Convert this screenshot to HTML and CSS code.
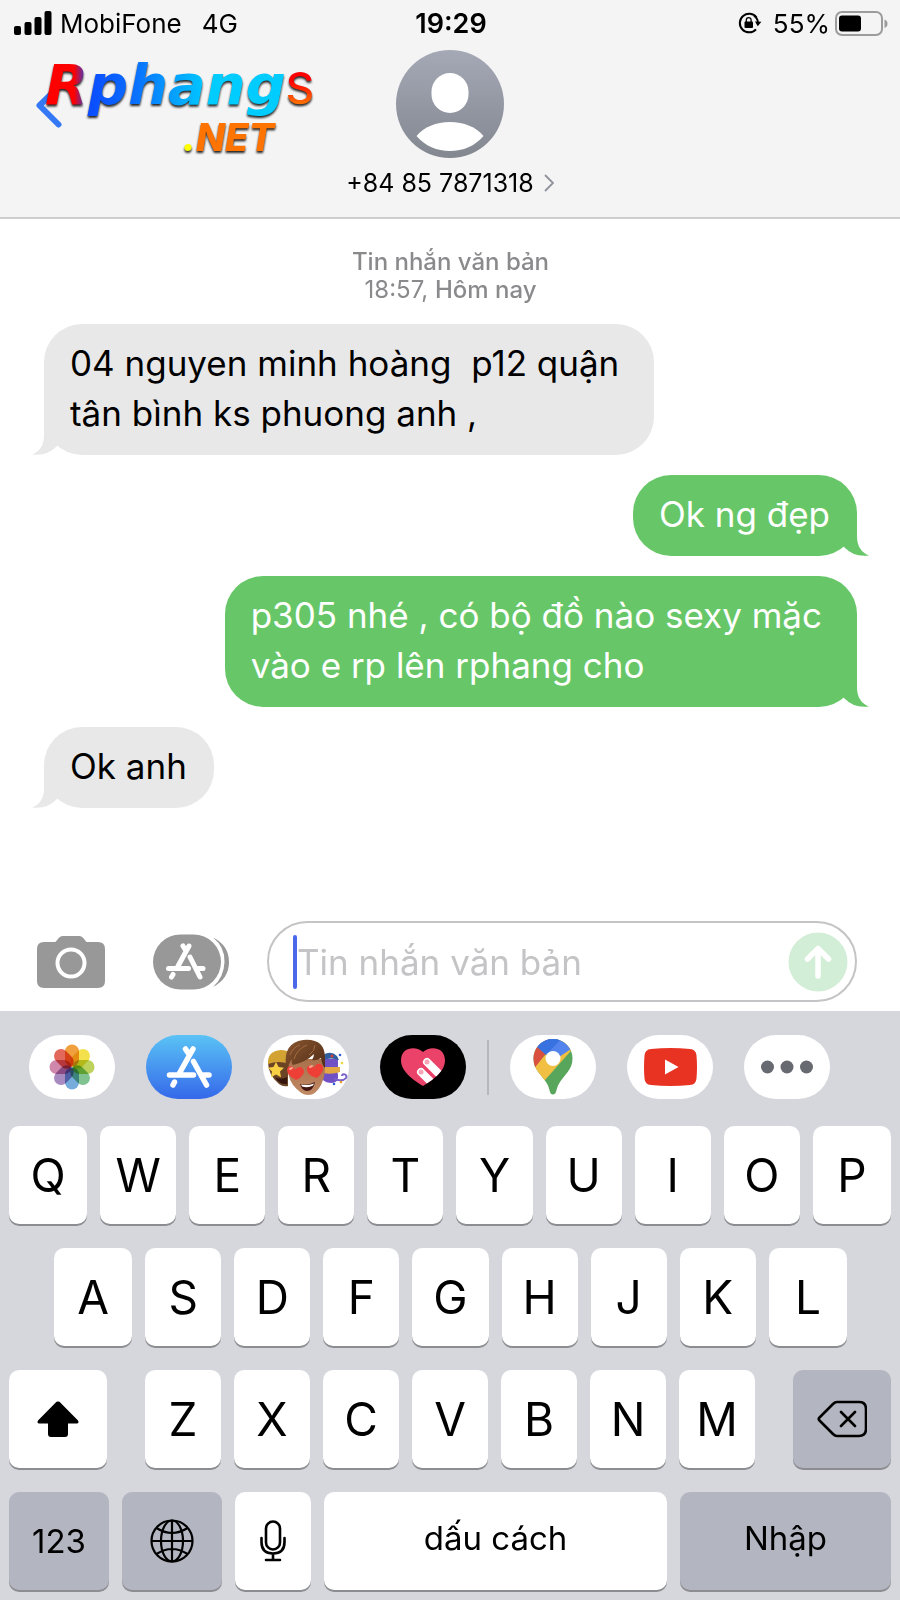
FILE: index.html
```html
<!DOCTYPE html>
<html lang="vi">
<head>
<meta charset="utf-8">
<meta name="viewport" content="width=device-width, initial-scale=1">
<title>+84 85 7871318</title>
<link rel="stylesheet" href="styles.css">
</head>
<body>
<div class="phone">
  <header class="header">
    <div class="status">
      <div class="status-side">
        <svg class="signal" width="38" height="24" viewBox="0 0 38 24" aria-hidden="true">
          <rect x="0" y="15" width="7" height="9" rx="2"/><rect x="10.5" y="11" width="7" height="13" rx="2"/><rect x="20.500" y="6" width="7" height="18" rx="2"/><rect x="30.500" y="0" width="7" height="24" rx="2"/>
        </svg>
        <span class="carrier">MobiFone</span>
        <span class="network">4G</span>
      </div>
      <time class="clock">19:29</time>
      <div class="status-side status-end">
        <svg class="rotation" width="24" height="22" viewBox="0 0 24 22" aria-hidden="true">
          <path d="M18.600 5.500A9.300 9.300 0 1 0 18 17.300" fill="none" stroke="#000" stroke-width="2"/>
          <path d="M16 3.700a9.300 9.300 0 0 1 4 7" fill="none" stroke="#000" stroke-width="2"/>
          <path d="M17 9.500l6.400.2-3.700 4.500z"/>
          <rect x="6.500" y="9.500" width="8.500" height="6.500" rx="1"/>
          <path d="M8.300 10V8a2.400 2.400 0 0 1 4.800 0v2" fill="none" stroke="#000" stroke-width="1.300"/>
        </svg>
        <span class="percent">55%</span>
        <svg class="battery" width="53" height="25" viewBox="0 0 53 25" aria-hidden="true">
          <rect x="1" y="1" width="46" height="23" rx="6" fill="none" stroke="#9c9c9c" stroke-width="2"/>
          <rect x="4" y="4.500" width="22" height="16" rx="3"/>
          <path d="M49.500 8.500q3 1 3 4.200t-3 4.200z" fill="#9c9c9c"/>
        </svg>
      </div>
    </div>
    <div class="contact-bar">
      <div class="nav">
        <button class="back" type="button" aria-label="Quay lại">
          <svg width="26" height="44" viewBox="0 0 26 44"><path d="M22.500 3L3.500 21.500l19 19" fill="none" stroke="#3478f6" stroke-width="6" stroke-linecap="round" stroke-linejoin="round"/></svg>
        </button>
        <div class="logo">
          <div class="logo-main"><span class="logo-name">Rphang</span><span class="logo-s">S</span></div>
          <div class="logo-net"><span class="logo-dot">.</span><span class="logo-tld">NET</span></div>
        </div>
      </div>
      <div class="contact">
        <svg class="avatar" width="108" height="108" viewBox="0 0 108 108" role="img" aria-label="Ảnh liên hệ">
          <defs><linearGradient id="av" x1="0" y1="0" x2="0" y2="1"><stop offset="0" stop-color="#a5a9b6"/><stop offset="1" stop-color="#838790"/></linearGradient></defs>
          <circle cx="54" cy="54" r="54" fill="url(#av)"/>
          <rect x="35.500" y="23" width="37" height="40" rx="18.500" fill="#fff"/>
          <path d="M20.500 86C28 77 40 72 54 72s26 5 33.500 14C79 96 67 101 54 101S29 96 20.500 86z" fill="#fff"/>
        </svg>
        <a class="number" href="#contact">+84 85 7871318
          <svg width="10" height="18" viewBox="0 0 10 18" aria-hidden="true"><path d="M1 1l8 8-8 8" fill="none" stroke="#8e929b" stroke-width="1.800"/></svg>
        </a>
      </div>
      <div></div>
    </div>
  </header>

  <main class="thread">
    <p class="stamp"><b>Tin nhắn văn bản</b><br>18:57, <b>Hôm nay</b></p>
    <div class="bubble received wrapped">04 nguyen minh hoàng  p12 quận
tân bình ks phuong anh ,<svg class="tail" width="38" height="38" viewBox="0 0 38 38" aria-hidden="true"><path d="M12 0V18Q12 33 0 37.500Q15 39.500 25 29L38 10V0z"/></svg></div>
    <div class="bubble sent">Ok ng đẹp<svg class="tail" width="38" height="38" viewBox="0 0 38 38" aria-hidden="true"><path d="M12 0V18Q12 33 0 37.500Q15 39.500 25 29L38 10V0z"/></svg></div>
    <div class="bubble sent wrapped">p305 nhé , có bộ đồ nào sexy mặc
vào e rp lên rphang cho<svg class="tail" width="38" height="38" viewBox="0 0 38 38" aria-hidden="true"><path d="M12 0V18Q12 33 0 37.500Q15 39.500 25 29L38 10V0z"/></svg></div>
    <div class="bubble received">Ok anh<svg class="tail" width="38" height="38" viewBox="0 0 38 38" aria-hidden="true"><path d="M12 0V18Q12 33 0 37.500Q15 39.500 25 29L38 10V0z"/></svg></div>
  </main>

  <form class="composer">
    <button class="camera" type="button" aria-label="Máy ảnh">
      <svg width="68" height="54" viewBox="0 0 68 54"><path d="M7 7h11c2 0 3-6 8-6h16c5 0 6 6 8 6h11q7 0 7 7v32q0 7-7 7H7q-7 0-7-7V14q0-7 7-7z" fill="#989898"/><circle cx="34" cy="28" r="13.500" fill="none" stroke="#fff" stroke-width="4"/></svg>
    </button>
    <button class="apps" type="button" aria-label="Ứng dụng">
      <svg width="76" height="56" viewBox="0 0 76 56"><rect y="0.500" width="68" height="55" rx="27.500" fill="#989898"/><path d="M60 3.500q16 8 16 24.500T60 53Q71 43 71.500 28T60 3.500z" fill="#989898"/>
        <g stroke="#fff" stroke-width="5" stroke-linecap="round" fill="none"><path d="M30 12l3 5M36 12L24 34M37 23l10 20M15.500 34.500h20M44 34.500h6M20 40.500l-1.500 2.500"/></g></svg>
    </button>
    <div class="field">
      <input class="field-input" type="text" placeholder="Tin nhắn văn bản" aria-label="Tin nhắn văn bản">
      <span class="caret"></span>
      <button class="send" type="button" aria-label="Gửi">
        <svg width="60" height="60" viewBox="0 0 60 60"><circle cx="30" cy="30" r="29.500" fill="#d2eed7"/><path d="M30 44V17M19.500 27L30 16.500 40.500 27" fill="none" stroke="#fff" stroke-width="5.500" stroke-linecap="round" stroke-linejoin="round"/></svg>
      </button>
    </div>
  </form>

  <section class="keyboard" aria-label="Bàn phím">
    <div class="drawer">
      <div class="drawer-group">
        <button class="app" type="button" aria-label="Ảnh">
          <svg width="46" height="46" viewBox="-23 -23 46 46"><g class="petals">
            <rect x="-7" y="-22.500" width="14" height="22" rx="7" fill="#f0a03c"/>
            <rect x="-7" y="-22.500" width="14" height="22" rx="7" fill="#f3e04b" transform="rotate(45)"/>
            <rect x="-7" y="-22.500" width="14" height="22" rx="7" fill="#bcd25c" transform="rotate(90)"/>
            <rect x="-7" y="-22.500" width="14" height="22" rx="7" fill="#80c290" transform="rotate(135)"/>
            <rect x="-7" y="-22.500" width="14" height="22" rx="7" fill="#76acdc" transform="rotate(180)"/>
            <rect x="-7" y="-22.500" width="14" height="22" rx="7" fill="#a78bc0" transform="rotate(225)"/>
            <rect x="-7" y="-22.500" width="14" height="22" rx="7" fill="#cf87ac" transform="rotate(270)"/>
            <rect x="-7" y="-22.500" width="14" height="22" rx="7" fill="#e2685c" transform="rotate(315)"/></g></svg>
        </button>
        <button class="app store" type="button" aria-label="App Store">
          <svg width="46" height="42" viewBox="0 0 46 42"><g stroke="#fff" stroke-width="5.500" stroke-linecap="round" fill="none"><path d="M19.500 3l4 6M27 3L13 28M27.500 15.500L40.500 39M3.500 29h24M36 29h7M8.500 36L7 39"/></g></svg>
        </button>
        <button class="app" type="button" aria-label="Memoji">
          <svg width="86" height="64" viewBox="0 0 86 64">
            <defs>
              <linearGradient id="hair" x1="0" y1="0" x2="1" y2="1"><stop offset="0" stop-color="#8a5630"/><stop offset="1" stop-color="#4c2a15"/></linearGradient>
              <linearGradient id="skin" x1="0" y1="0" x2="0" y2="1"><stop offset="0" stop-color="#a8714c"/><stop offset="1" stop-color="#c18a65"/></linearGradient>
            </defs>
            <path d="M5 27h20v24q-5 1-9-2Q5 40 5 27z" fill="#6b4426"/>
            <path d="M5 29Q4 16 18 15q6 0 8 3v11q-10-4-21 0z" fill="#d2a332"/>
            <path d="M12 42q6 3 12 0v7q-8 1-12-7z" fill="#35160f"/>
            <path d="M13 27l2.600 5 5.400.8-4 3.800 1 5.600-5-2.700-5 2.700 1-5.600-4-3.800 5.400-.8z" fill="#f6cf45"/>
            <path d="M60 24h15v10h-1l1 6q1 7-6 8-6 0-9-3z" fill="#7050c4"/>
            <path d="M60 20q8-5 14 1l2 4q-8-3-16 0z" fill="#2f5f9c"/><circle cx="69" cy="21" r="1.500" fill="#d33c40"/>
            <path d="M60 32h17v5q-8 3-17 1z" fill="#e3a744"/>
            <path d="M71 44q9 3 12-1c2-4-4-5-4-2" fill="none" stroke="#7a62cc" stroke-width="2"/>
            <g><circle cx="77" cy="20" r="1.300" fill="#355de0"/><circle cx="79" cy="28" r="1.300" fill="#ead93b"/><circle cx="71" cy="49" r="1.300" fill="#355de0"/><circle cx="78" cy="47" r="1.300" fill="#e99c35"/></g>
            <path d="M25 24Q23 40 30 50q8 10 15 10 8 0 13-10 6-12 3-26z" fill="url(#skin)"/>
            <path d="M23 31Q20 8 40 5q22-2 22 18v10q-3-3-4-10-5 3-9 2 2-3 2-6-8 8-21 11-2-2-1-6-4 4-4 13z" fill="url(#hair)"/>
            <path d="M31 24q3-10 13-14M46 20q6-4 6-10M27 20q3-8 10-10" fill="none" stroke="#a36c3f" stroke-width="1"/>
            <path d="M37 49q8 2 15-2-2 9-8 9-5 0-7-7z" fill="#451713"/><path d="M38 49.500q7 1.500 13-1l-1 2q-5 3-11 1z" fill="#fff"/>
            <g fill="#ee3f37"><path d="M33 45q-9-5-9-10c0-5 7-5 8 0 3-5 9-3 9 2q-1 5-8 8z"/><path d="M54 43q-10-3-10-8c-1-5 5-6 7-2 1-5 8-6 9-1q1 5-6 11z"/></g>
            <path d="M27 34l2-1M47 32l2-1" stroke="#ffa08c" stroke-width="2" stroke-linecap="round"/>
          </svg>
        </button>
        <button class="app dark" type="button" aria-label="Digital Touch">
          <svg width="44" height="38" viewBox="0 0 44 38"><defs><clipPath id="heart"><path d="M22 4C16-2 0-2 0 12.500 0 24 14 33 22 38 30 33 44 24 44 12.500 44-2 28-2 22 4z"/></clipPath></defs><g clip-path="url(#heart)"><path d="M0 0h44v38H0z" fill="#ea4269"/><path d="M26 14l18 18M20 24l14 14" stroke="#fff" stroke-width="8" stroke-linecap="round"/></g><circle cx="26" cy="14" r="2.500" fill="#f7a4b5"/><circle cx="20" cy="24" r="2.500" fill="#f7a4b5"/></svg>
        </button>
      </div>
      <span class="divider"></span>
      <div class="drawer-group">
        <button class="app" type="button" aria-label="Google Maps">
          <svg width="40" height="56" viewBox="0 0 40 56"><defs><clipPath id="pin"><path d="M20 0A19.500 19.500 0 0 0 .5 19.500c0 12 8.500 16 14 26 2.500 5 2 10 5.500 10s3-5 5.500-10c5.500-10 14-14 14-26A19.500 19.500 0 0 0 20 0z"/></clipPath></defs><g clip-path="url(#pin)"><path d="M0 0h40v56H0z" fill="#58a55c"/><path d="M-5 35L35-10 45 4 12 41 0 50z" fill="#f1bf42"/><path d="M-8 0H16L14 13 0 31z" fill="#d9503f"/><path d="M3 4L20 22 38 10V0H3z" fill="#5383ec"/><path d="M4 8L13 16 28 0H4z" fill="#3871e0"/></g><circle cx="20" cy="19.500" r="7.500" fill="#fff"/></svg>
        </button>
        <button class="app" type="button" aria-label="YouTube">
          <svg width="53" height="38" viewBox="0 0 53 38"><path d="M7 1q19.500-2 39 0 6 .5 6.500 6.500 1 11.500 0 23Q52 36.500 46 37q-19.500 2-39 0Q1 36.500.5 30.500q-1-11.500 0-23Q1 1.500 7 1z" fill="#e83323"/><path d="M21 11.500v15L34.500 19z" fill="#fff"/></svg>
        </button>
        <button class="app" type="button" aria-label="Thêm">
          <svg width="52" height="14" viewBox="0 0 52 14" fill="#686a71"><circle cx="6.500" cy="7" r="6.500"/><circle cx="26" cy="7" r="6.500"/><circle cx="45.500" cy="7" r="6.500"/></svg>
        </button>
      </div>
    </div>

    <div class="row"><button class="key edge" type="button">Q</button><button class="key" type="button">W</button><button class="key" type="button">E</button><button class="key" type="button">R</button><button class="key" type="button">T</button><button class="key" type="button">Y</button><button class="key" type="button">U</button><button class="key" type="button">I</button><button class="key" type="button">O</button><button class="key edge" type="button">P</button></div>
    <div class="row row-home"><button class="key edge" type="button">A</button><button class="key" type="button">S</button><button class="key" type="button">D</button><button class="key" type="button">F</button><button class="key" type="button">G</button><button class="key" type="button">H</button><button class="key" type="button">J</button><button class="key" type="button">K</button><button class="key edge" type="button">L</button></div>
    <div class="row row-shift">
      <button class="key wide" type="button" aria-label="Shift"><svg width="42" height="36" viewBox="0 0 42 36"><path d="M19.500.8Q21 0 22.500.8L41 19.500q1.500 3-1.500 3H31V33q0 3-3 3H14q-3 0-3-3V22.500H2.500q-3 0-1.500-3z"/></svg></button>
      <div class="letters"><button class="key" type="button">Z</button><button class="key" type="button">X</button><button class="key" type="button">C</button><button class="key" type="button">V</button><button class="key" type="button">B</button><button class="key" type="button">N</button><button class="key" type="button">M</button></div>
      <button class="key wide gray" type="button" aria-label="Xóa"><svg width="50" height="38" viewBox="0 0 50 38" fill="none" stroke="#000" stroke-width="2.600" stroke-linecap="round" stroke-linejoin="round"><path d="M20 2h22q7 0 7 7v20q0 7-7 7H20q-2 0-4-2L2.500 20.500q-1.500-1.500 0-3L16 4q2-2 4-2zM24 12l14 14M38 12L24 26"/></svg></button>
    </div>
    <div class="row">
      <button class="key func gray" type="button">123</button>
      <button class="key func gray" type="button" aria-label="Đổi bàn phím"><svg width="44" height="44" viewBox="0 0 44 44" fill="none" stroke="#000" stroke-width="2.200"><circle cx="22" cy="22" r="20.500"/><ellipse cx="22" cy="22" rx="11" ry="20.500"/><path d="M22 1.500v41M1.500 22h41M6.500 9q15.500 10 31 0M6.500 35q15.500-10 31 0"/></svg></button>
      <button class="key" type="button" aria-label="Đọc chính tả"><svg width="26" height="42" viewBox="0 0 26 42" fill="none" stroke="#000" stroke-width="2.600" stroke-linecap="round"><rect x="6" y="1.500" width="14" height="28" rx="7"/><path d="M1.500 18v4q0 11.500 11.500 11.500T24.500 22v-4M13 33.500v6.500M6 40h14"/></svg></button>
      <button class="key space" type="button">dấu cách</button>
      <button class="key enter gray" type="button">Nhập</button>
    </div>
  </section>
</div>
</body>
</html>
```
FILE: styles.css
```css
* { box-sizing: border-box; }

body {
  margin: 0;
  background: #fff;
  color: #000;
  font-family: Inter, "Noto Sans", sans-serif;
}

button {
  margin: 0;
  padding: 0;
  border: 0;
  background: none;
  color: inherit;
  font: inherit;
}

svg { display: block; flex: none; }

.phone {
  display: flex;
  flex-direction: column;
  min-height: 100vh;
}

/* Header */
.header {
  background: #f4f4f5;
  border-bottom: 2px solid #cececf;
}

.status {
  display: grid;
  grid-template-columns: 1fr auto 1fr;
  align-items: center;
  height: 46px;
  padding: 0 12px 0 14px;
  font-size: 26px;
}

.status-side { display: flex; align-items: center; }
.status-end { justify-content: flex-end; }
.carrier { margin-left: 8px; }
.network { margin-left: 20px; }
.clock { font-size: 27px; font-weight: 600; }
.percent { margin: 0 5px 0 11px; }

.contact-bar {
  display: grid;
  grid-template-columns: 1fr auto 1fr;
  padding-top: 4px;
}

.nav { position: relative; }

.back {
  position: absolute;
  left: 36px;
  top: 34px;
}

.logo {
  position: relative;
  width: max-content;
  padding-left: 45px;
  filter: drop-shadow(0 2px 1px #222);
}

.logo-main {
  display: flex;
  align-items: baseline;
  height: 68px;
  line-height: 70px;
}

.logo-name {
  background: linear-gradient(90deg, #f00 12%, #0a4cff 18%, #0a6cff 36%, #00ccff 68%);
  background-clip: text;
  -webkit-background-clip: text;
  color: transparent;
  font-family: "DejaVu Sans", sans-serif;
  font-size: 56px;
  font-style: italic;
  font-weight: 700;
}

.logo-s {
  background: linear-gradient(#f00 40%, #ff7a00 75%);
  background-clip: text;
  -webkit-background-clip: text;
  color: transparent;
  font-size: 44px;
  font-weight: 500;
}

.logo-net {
  padding-right: 40px;
  color: #ff7300;
  font-size: 38px;
  font-style: italic;
  font-weight: 800;
  line-height: 38px;
  text-align: right;
}

.logo-dot { color: #ff0; }

.contact {
  display: flex;
  flex-direction: column;
  align-items: center;
}

.number {
  display: flex;
  align-items: center;
  gap: 10px;
  margin: 11px 0 20px;
  color: #000;
  font-size: 25px;
  line-height: 28px;
  text-decoration: none;
}

/* Conversation */
.thread {
  display: flex;
  flex: 1;
  flex-direction: column;
  gap: 20px;
  padding: 29px 43px 20px 44px;
}

.stamp {
  margin: 0;
  color: #8a8a8d;
  font-size: 24px;
  line-height: 28px;
  text-align: center;
}

.stamp b { font-weight: 500; }

.bubble {
  position: relative;
  padding: 14px 27px 17px 26px;
  border-radius: 38px;
  font-size: 35px;
  line-height: 50px;
  white-space: pre-wrap;
}

.wrapped { padding-right: 35px; }

.received { align-self: flex-start; background: #e8e8e9; }
.sent { align-self: flex-end; background: #67c768; color: #fff; }

.tail {
  position: absolute;
  bottom: 0;
  left: -12px;
  fill: #e8e8e9;
}

.sent .tail {
  right: -12px;
  left: auto;
  fill: #67c768;
  transform: scaleX(-1);
}

/* Message field */
.composer {
  display: flex;
  align-items: center;
  margin: 0;
  padding: 0 43px 9px 37px;
}

.apps { margin: 0 38px 0 48px; }

.field {
  position: relative;
  display: flex;
  flex: 1;
  align-items: center;
  min-width: 0;
  height: 81px;
  padding: 0 7px 0 28px;
  border: 2px solid #c4c4c6;
  border-radius: 41px;
}

.field-input {
  flex: 1;
  min-width: 0;
  padding: 0;
  border: 0;
  outline: 0;
  background: none;
  font-family: inherit;
  font-size: 35px;
}

.field-input::placeholder { color: #c4c4c6; opacity: 1; }

.caret {
  position: absolute;
  left: 24px;
  width: 4px;
  height: 54px;
  border-radius: 2px;
  background: #4c68ea;
}

/* Keyboard */
.keyboard {
  display: flex;
  flex-direction: column;
  gap: 24px;
  padding: 24px 9px 10px;
  background: #d6d7dc;
}

.drawer {
  display: flex;
  align-items: center;
  gap: 21px;
  margin-bottom: 3px;
  padding-left: 20px;
}

.drawer-group { display: flex; gap: 31px; }

.divider {
  width: 2px;
  height: 55px;
  background: #b6b7bc;
}

.app {
  display: flex;
  align-items: center;
  justify-content: center;
  width: 86px;
  height: 64px;
  border-radius: 32px;
  background: #fff;
}

.petals rect { mix-blend-mode: multiply; }
.store { background: linear-gradient(#5ac3f5, #3568ea); }
.dark { background: #000; }

.row {
  display: flex;
  gap: 13px;
}

.row-home { padding: 0 44px 0 45px; }
.row-shift { gap: 38px; }

.letters {
  display: flex;
  flex: 610 1 0;
  gap: 13px;
}

.key {
  display: flex;
  flex: 76 1 0;
  align-items: center;
  justify-content: center;
  min-width: 0;
  height: 98px;
  border-radius: 10px;
  background: #fff;
  box-shadow: 0 2px 0 #8b8d91;
  font-size: 46px;
}

.edge { flex-grow: 78; }
.wide { flex-grow: 98; }
.func { flex-grow: 100; }
.space { flex-grow: 343; }
.enter { flex-grow: 211; }

.func, .space, .enter { font-size: 33px; }
.space, .enter { padding-bottom: 6px; }
.gray { background: #b3b6c0; }
```
